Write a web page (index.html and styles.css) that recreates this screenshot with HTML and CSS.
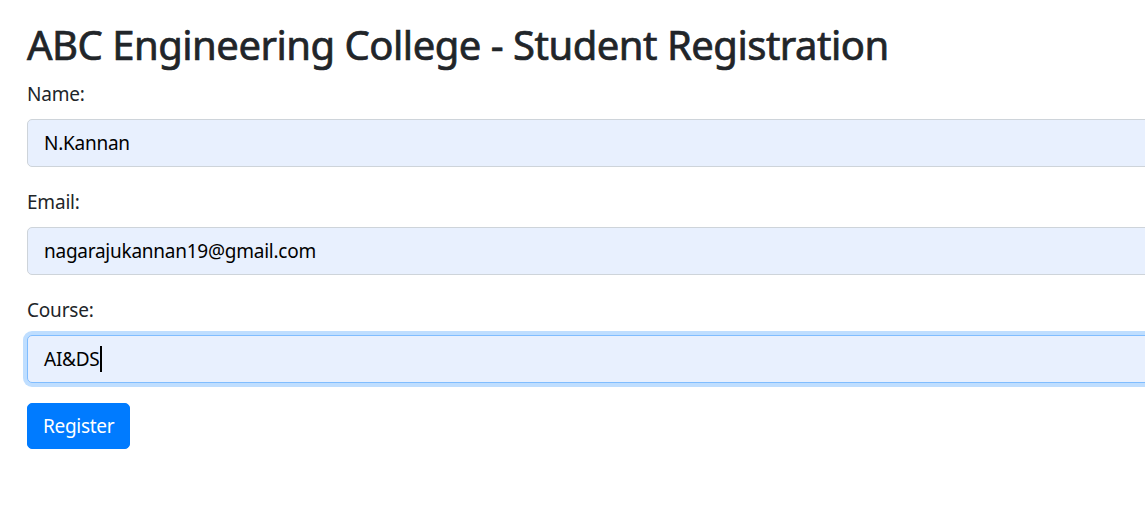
FILE: index.html
```html
<!DOCTYPE html>
<html>
<head>
<meta charset="utf-8">
<link rel="stylesheet" href="styles.css">
</head>
<body>
<div class="container">
  <h1 class="title">ABC Engineering College - Student Registration</h1>
  <form class="form">
    <div class="group">
      <label class="label">Name:</label>
      <div class="control">N.Kannan</div>
    </div>
    <div class="group">
      <label class="label">Email:</label>
      <div class="control">nagarajukannan19@gmail.com</div>
    </div>
    <div class="group">
      <label class="label">Course:</label>
      <div class="control focused">AI&amp;DS<span class="caret"></span></div>
    </div>
    <button type="button" class="btn">Register</button>
  </form>
</div>
</body>
</html>
```

FILE: styles.css
```css
html, body {
  margin: 0;
  padding: 0;
  overflow: hidden;
  background: #fff;
}
body {
  font-family: "Noto Sans", "Open Sans", sans-serif;
  font-size: 19px;
  letter-spacing: -0.2px;
  line-height: 30px;
  color: #212529;
}
.container {
  padding: 21px 0 0 27px;
  width: 1300px;
}
.title {
  margin: 0 0 10px;
  font-size: 40px;
  font-weight: 400;
  letter-spacing: -0.5px;
  line-height: 48px;
  -webkit-text-stroke: 0.7px currentColor;
}
.form {
  display: flex;
  flex-direction: column;
  align-items: flex-start;
}
.group {
  display: flex;
  flex-direction: column;
  align-self: stretch;
  margin-bottom: 20px;
}
.label {
  display: block;
  margin-bottom: 10px;
}
.control {
  display: flex;
  align-items: center;
  height: 46px;
  padding: 0 16px;
  border: 1px solid #ced4da;
  border-radius: 5px;
  background: #e8f0fe;
  color: #000;
  font-size: 19px;
  letter-spacing: -0.25px;
}
.control.focused {
  border-color: #80bdff;
  box-shadow: 0 0 0 4px #bfdeff;
}
.caret {
  display: inline-block;
  width: 2px;
  height: 26px;
  background: #000;
}
.btn {
  font-family: inherit;
  font-size: 19px;
  letter-spacing: -0.3px;
  line-height: 30px;
  padding: 7px 15px;
  border: 1px solid #007bff;
  border-radius: 5px;
  background: #007bff;
  color: #fff;
  cursor: pointer;
}
```
